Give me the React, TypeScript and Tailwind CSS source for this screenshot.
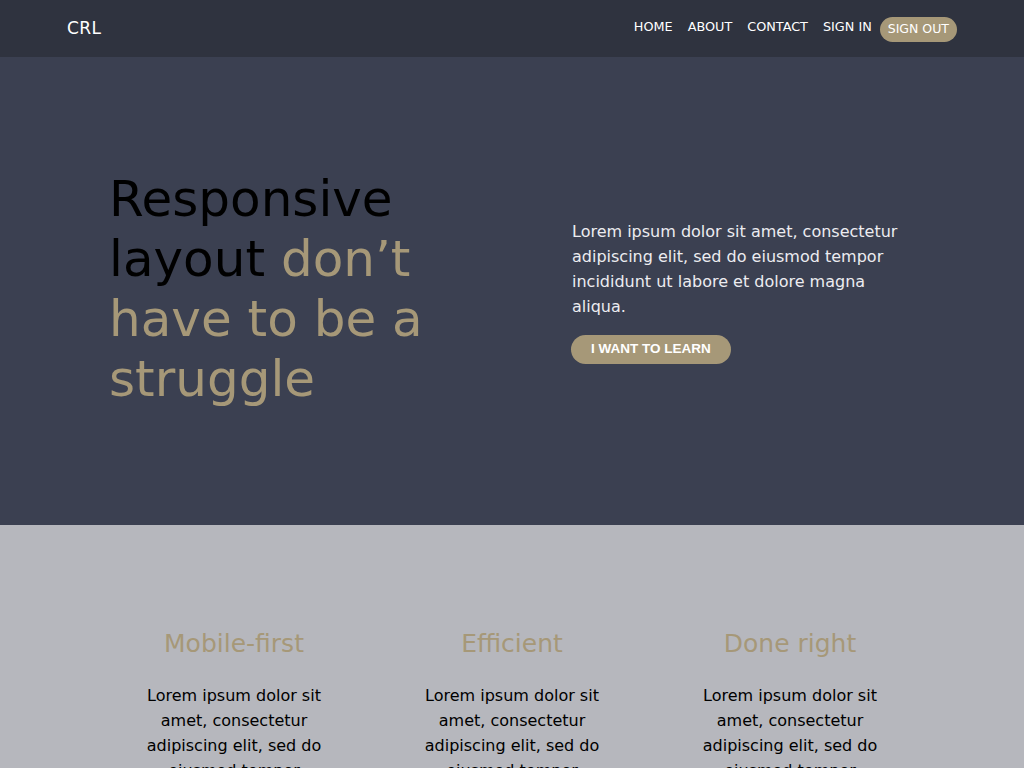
const gold = "text-[#a69878]";

const features = [
  { title: "Mobile-first" },
  { title: "Efficient" },
  { title: "Done right" },
];

const lorem =
  "Lorem ipsum dolor sit amet, consectetur adipiscing elit, sed do eiusmod tempor incididunt ut labore et dolore magna aliqua.";

const App = () => {
  return (
    <div className="min-h-screen font-['DejaVu_Sans',sans-serif] bg-[#b6b7bd]">
      <header className="h-[57px] bg-[#2f333f] flex items-center justify-between px-[67px]">
        <span className="text-[17px] text-white tracking-wide">CRL</span>
        <nav className="flex items-center gap-[15px] text-[12.8px] text-white">
          <a className="pb-[4px]">HOME</a>
          <a className="pb-[4px]">ABOUT</a>
          <a className="pb-[4px]">CONTACT</a>
          <a className="pb-[4px]">SIGN IN</a>
          <button className="-ml-[7px] rounded-full bg-[#a69878] px-[8px] h-[25px] mt-[2px] text-[12.5px] text-white">
            SIGN OUT
          </button>
        </nav>
      </header>

      <section className="h-[468px] bg-[#3b4051] flex items-center px-[109px]">
        <div className="grid grid-cols-2 w-full gap-[120px] items-center">
          <h1 className="text-[50px] leading-[60px] text-black -mt-[4px]">
            Responsive layout{" "}
            <span className={gold}>don’t have to be a struggle</span>
          </h1>
          <div className="flex flex-col items-start gap-4">
            <p className="text-[16px] leading-[25px] text-[#ececf0] max-w-[340px]">{lorem}</p>
            <button className="-ml-[1px] rounded-full bg-[#a69878] px-[20px] h-[29px] font-['Liberation_Sans',sans-serif] font-bold text-[13.5px] text-white">
              I WANT TO LEARN
            </button>
          </div>
        </div>
      </section>

      <section className="px-[95px] pt-[100px]">
        <div className="grid grid-cols-3">
          {features.map((f) => (
            <div key={f.title} className="flex flex-col items-center text-center">
              <h2 className={`text-[25px] ${gold}`}>{f.title}</h2>
              <p className="mt-[20px] w-[180px] text-[16px] leading-[25px] text-black">{lorem}</p>
            </div>
          ))}
        </div>
      </section>
    </div>
  );
};

export default App;
